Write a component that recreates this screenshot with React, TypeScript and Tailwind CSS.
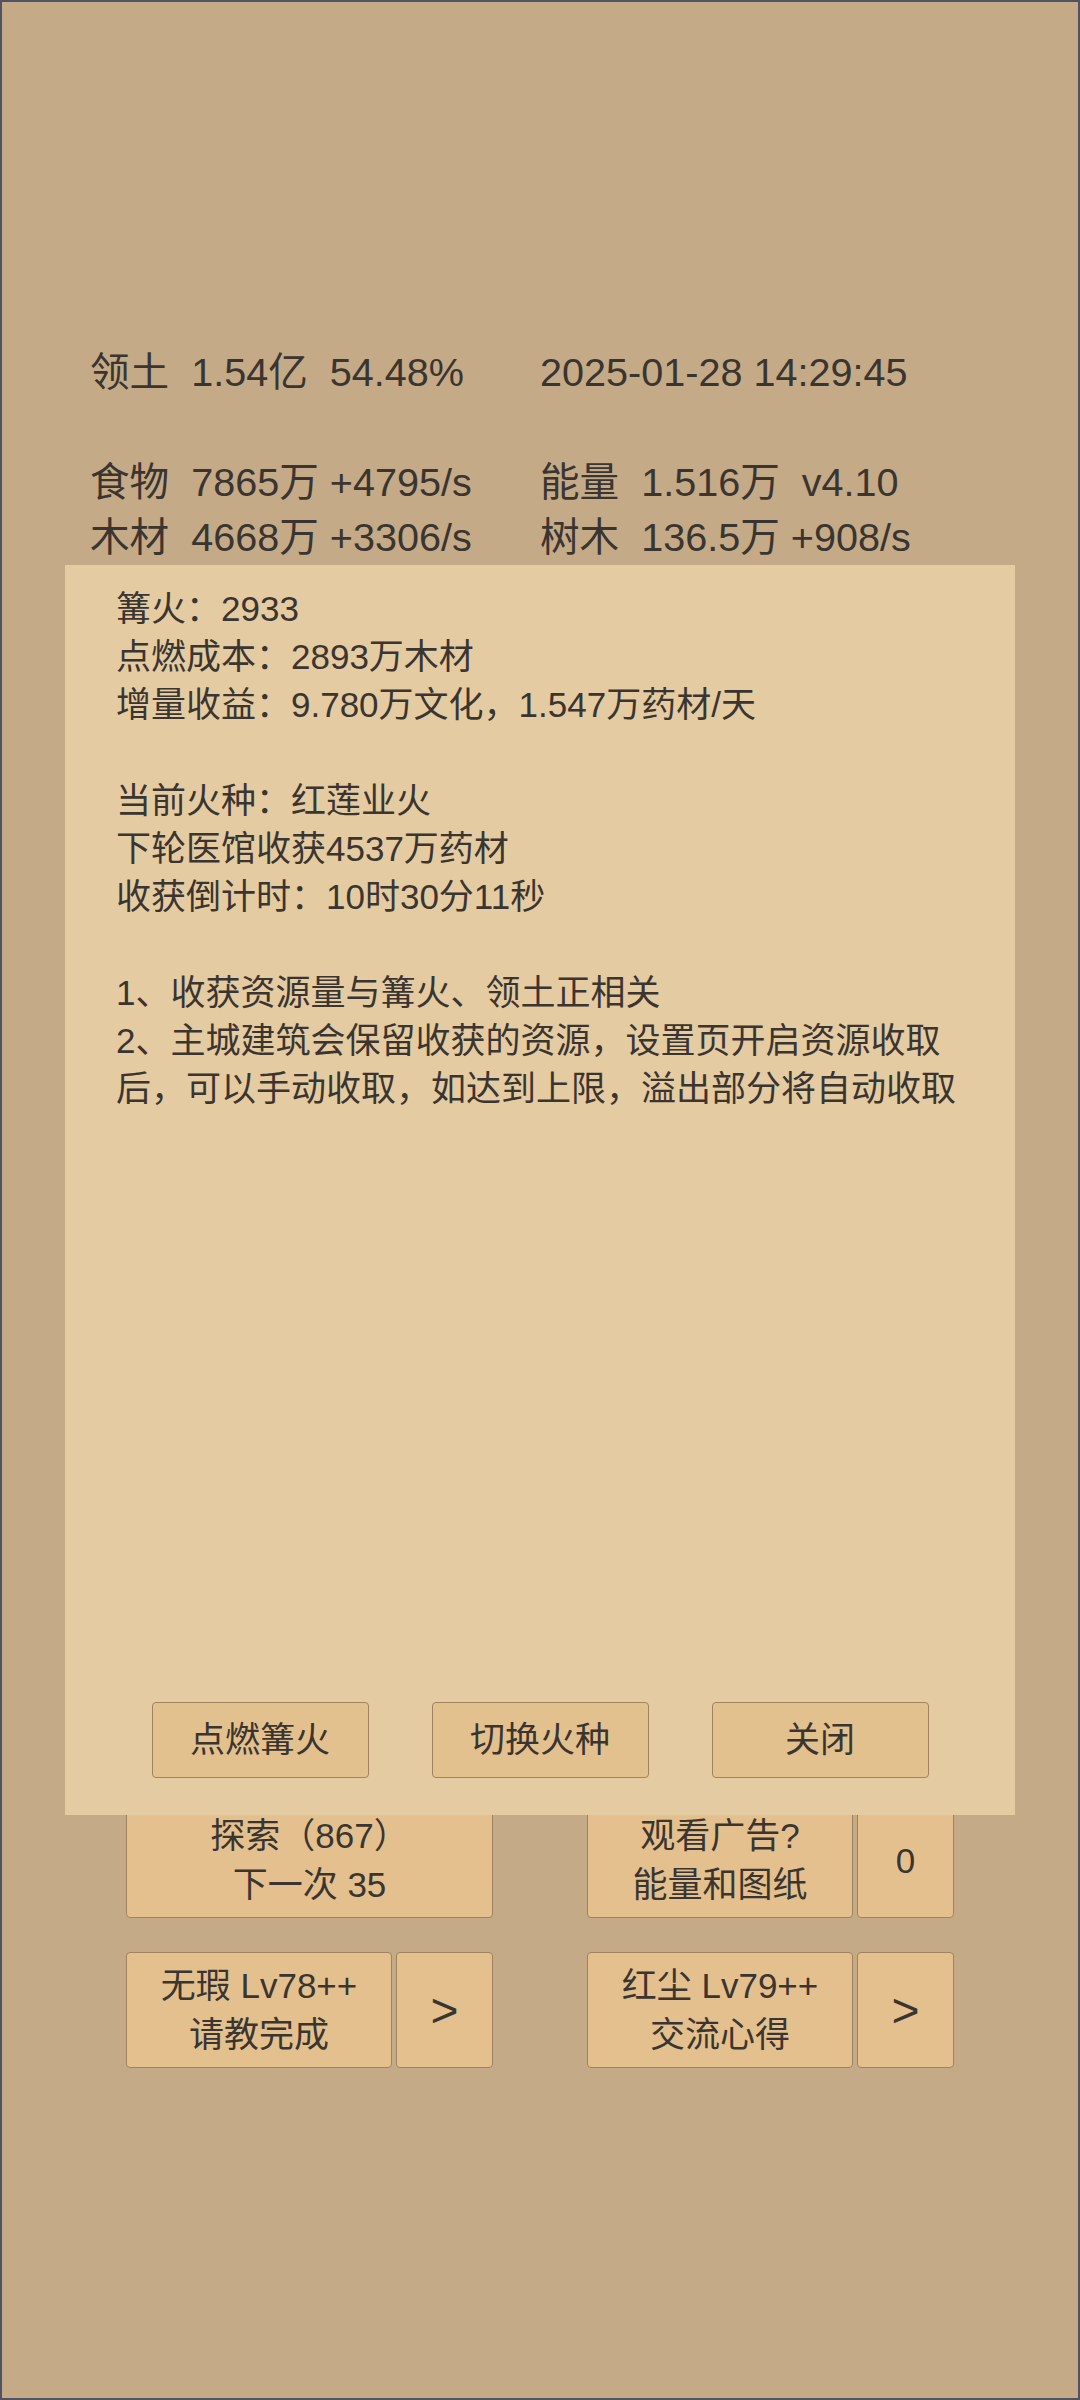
const font = { fontFamily: '"Liberation Sans", "Noto Sans CJK SC", sans-serif' };

function Stat({ children }: { children: string }) {
  return <div className="whitespace-pre">{children}</div>;
}

function GameButton({
  lines,
  className,
  big,
}: {
  lines: string[];
  className: string;
  big?: boolean;
}) {
  return (
    <div
      className={`flex flex-col items-center justify-center rounded-[4px] border border-[#a0825e] bg-[#e3c08e] text-center ${
        big ? "text-[48px] leading-[49px]" : "text-[35px] leading-[49px]"
      } ${className}`}
    >
      {lines.map((l) => (
        <div key={l} className="whitespace-pre">
          {l}
        </div>
      ))}
    </div>
  );
}

export default function App() {
  return (
    <div
      style={font}
      className="relative h-[2400px] w-[1080px] overflow-hidden border-2 border-[#4e5561] bg-[#c4aa87] text-[#3a3530]"
    >
      {/* resources header */}
      <div className="flex pl-[88px] pt-[343px] text-[39.6px] leading-[55px]">
        <div className="w-[450px]">
          <Stat>{"领土  1.54亿  54.48%"}</Stat>
          <div className="h-[55px]" />
          <Stat>{"食物  7865万 +4795/s"}</Stat>
          <Stat>{"木材  4668万 +3306/s"}</Stat>
        </div>
        <div>
          <Stat>{"2025-01-28 14:29:45"}</Stat>
          <div className="h-[55px]" />
          <Stat>{"能量  1.516万  v4.10"}</Stat>
          <Stat>{"树木  136.5万 +908/s"}</Stat>
        </div>
      </div>

      {/* main actions */}
      <div className="mt-[1237px] flex flex-col gap-[34px]">
        <div className="flex justify-center gap-[94px]">
          <div className="flex w-[367px]">
            <GameButton className="h-[116px] w-[367px]" lines={["探索（867）", "下一次 35"]} />
          </div>
          <div className="flex w-[367px] gap-[4px]">
            <GameButton className="h-[116px] w-[266px]" lines={["观看广告?", "能量和图纸"]} />
            <GameButton className="h-[116px] w-[97px]" lines={["0"]} />
          </div>
        </div>
        <div className="flex justify-center gap-[94px]">
          <div className="flex w-[367px] gap-[4px]">
            <GameButton className="h-[116px] w-[266px]" lines={["无瑕 Lv78++", "请教完成"]} />
            <GameButton className="h-[116px] w-[97px]" lines={[">"]} big />
          </div>
          <div className="flex w-[367px] gap-[4px]">
            <GameButton className="h-[116px] w-[266px]" lines={["红尘 Lv79++", "交流心得"]} />
            <GameButton className="h-[116px] w-[97px]" lines={[">"]} big />
          </div>
        </div>
      </div>

      {/* bonfire dialog */}
      <div className="absolute left-[63px] top-[563px] flex h-[1250px] w-[950px] flex-col bg-[#e5cba2] px-[51px] pb-[37px] pt-[20px] text-[35px] leading-[48px]">
        <div className="flex-1">
          <div>篝火：2933</div>
          <div>点燃成本：2893万木材</div>
          <div>增量收益：9.780万文化，1.547万药材/天</div>
          <div className="h-[48px]" />
          <div>当前火种：红莲业火</div>
          <div>下轮医馆收获4537万药材</div>
          <div>收获倒计时：10时30分11秒</div>
          <div className="h-[48px]" />
          <div>1、收获资源量与篝火、领土正相关</div>
          <div>2、主城建筑会保留收获的资源，设置页开启资源收取后，可以手动收取，如达到上限，溢出部分将自动收取</div>
        </div>
        <div className="flex justify-center gap-[63px] text-[35px]">
          {["点燃篝火", "切换火种", "关闭"].map((t) => (
            <div
              key={t}
              className="flex h-[76px] w-[217px] items-center justify-center rounded-[4px] border border-[#a0825e] bg-[#e3c18f]"
            >
              {t}
            </div>
          ))}
        </div>
      </div>
    </div>
  );
}
